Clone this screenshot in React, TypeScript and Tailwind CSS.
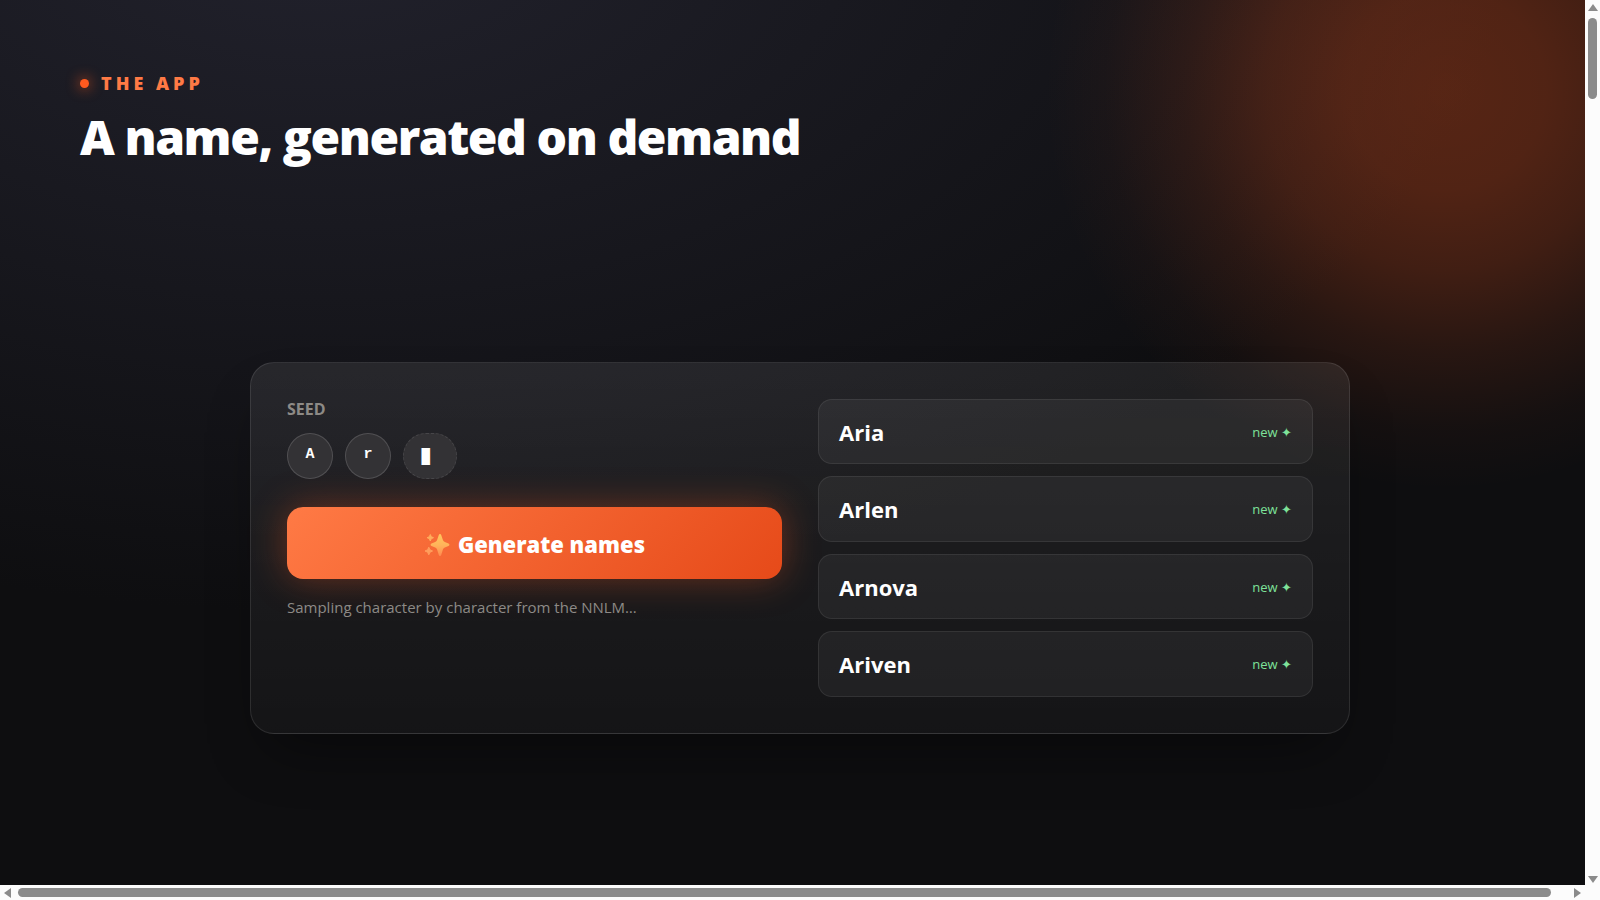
import React, { useState } from 'react';
import { clsx } from 'clsx';

interface GeneratedName {
  id: number;
  name: string;
}

const NAMES: GeneratedName[] = [
  { id: 1, name: 'Aria' },
  { id: 2, name: 'Arlen' },
  { id: 3, name: 'Arnova' },
  { id: 4, name: 'Ariven' },
];

const SEED = ['A', 'r'];

const Sparkles = () => (
  <svg width="26" height="26" viewBox="0 0 26 26" aria-hidden="true">
    <defs>
      <linearGradient id="spark" x1="0" y1="0" x2="0" y2="1">
        <stop offset="0" stopColor="#ffc65c" />
        <stop offset="0.5" stopColor="#ffb45a" />
        <stop offset="1" stopColor="#ff8a50" />
      </linearGradient>
    </defs>
    <path
      d="M16 2c.6 0 1 .4 1.200 1l1.800 5.200c.3.900.9 1.500 1.800 1.800l3.700 1.500c1.200.5 1.200 2.100 0 2.500l-3.700 1.500c-.9.300-1.500.9-1.800 1.800L17.200 23c-.4 1.200-2 1.200-2.400 0L13 17.300c-.3-.9-.9-1.500-1.800-1.800L7.500 14c-1.200-.5-1.200-2 0-2.500l3.700-1.500c.9-.3 1.500-.9 1.800-1.800L14.800 3c.2-.6.600-1 1.200-1z"
      fill="url(#spark)"
    />
    <path
      d="M6.300 2.500l1 2.200 2.200 1-2.200 1-1 2.300-1-2.300-2.200-1 2.200-1z"
      fill="#ffad5c"
      stroke="#ffad5c"
      strokeLinejoin="round"
    />
    <path
      d="M4.800 15.200l1.200 2.600 2.600 1.200L6 20.200l-1.200 2.600-1.200-2.600L1 19l2.600-1.200z"
      fill="#ff9d5c"
      stroke="#ff9d5c"
      strokeLinejoin="round"
    />
  </svg>
);

const Chip: React.FC<{ children: React.ReactNode; cursor?: boolean }> = ({ children, cursor }) => (
  <span
    className={clsx(
      'flex h-[46px] items-center justify-center rounded-full border bg-[#333235] text-white',
      cursor
        ? "w-[54px] border-dashed border-white/10 font-['Noto_Sans_CJK_JP',monospace] text-[17px]"
        : "w-[46px] border-white/15 font-['Liberation_Mono',monospace] text-[15px] font-bold"
    )}
  >
    {children}
  </span>
);

const Arrow: React.FC<{ d: string }> = ({ d }) => (
  <svg width="10" height="10" viewBox="0 0 10 10" fill="#8b8b8b" aria-hidden="true">
    <path d={d} />
  </svg>
);

const App: React.FC = () => {
  const [names] = useState<GeneratedName[]>(NAMES);

  return (
    <div className="grid h-screen grid-cols-[1fr_15px] grid-rows-[1fr_15px] bg-[#fcfcfc] font-['Open_Sans','Noto_Sans',sans-serif]">
      <main className="relative flex flex-col overflow-hidden bg-[#0e0e10] bg-[radial-gradient(1200px_700px_at_20%_-10%,#22222d_0%,#0e0e10_100%)] pt-[70px] pr-[65px] pl-20">
        {/* Warm glow in the corner */}
        <div className="pointer-events-none absolute -top-[310px] -right-[260px] size-[800px] bg-[radial-gradient(closest-side,rgba(255,90,31,0.3)_0%,rgba(255,90,31,0.28)_25%,rgba(255,90,31,0.21)_45%,rgba(255,90,31,0.11)_65%,rgba(255,90,31,0.03)_85%,rgba(255,90,31,0)_100%)]" />

        <header className="relative h-[140px] shrink-0">
          <p className="flex items-center gap-3 text-lg leading-[26px] font-extrabold tracking-[4px] text-[#ff7a45]">
            <span className="size-[9px] rounded-full bg-[#ff5a1f] shadow-[0_0_14px_#ff5a1f]" />
            THE APP
          </p>
          <h1 className="mt-3 text-5xl leading-[58px] font-extrabold tracking-[-0.03em] text-white">
            A name, generated on demand
          </h1>
        </header>

        <div className="relative flex flex-1 items-center justify-center">
          <section className="grid w-full max-w-[1100px] grid-cols-2 gap-9 rounded-3xl border border-white/10 bg-linear-to-b from-white/8 to-white/3 p-9 shadow-[0_30px_60px_-20px_rgba(0,0,0,0.45)]">
            <div>
              <h2 className="text-base leading-5 font-bold text-[#8d8a86]">SEED</h2>
              <div className="mt-[14px] flex gap-3">
                {SEED.map((char) => (
                  <Chip key={char}>{char}</Chip>
                ))}
                <Chip cursor>▌</Chip>
              </div>
              <button
                type="button"
                className="mt-7 flex h-[72px] w-full items-center justify-center gap-2 rounded-2xl bg-linear-[135deg,#ff7a45,#e64a19] pt-1 text-[22px] font-extrabold text-white shadow-[0_0_36px_rgba(255,90,31,0.35)]"
              >
                <Sparkles />
                Generate names
              </button>
              <p className="mt-4 text-[15px] leading-6 text-[#8d8a86]">
                Sampling character by character from the NNLM…
              </p>
            </div>

            <ul className="grid h-[298px] auto-rows-fr gap-3">
              {names.map((item) => (
                <li
                  key={item.id}
                  className="flex items-center justify-between rounded-[14px] border border-white/8 bg-white/5 px-5 pt-0.5"
                >
                  <span className="text-[22px] font-bold text-white">{item.name}</span>
                  <span className="text-[13px] text-[#7ee29a]">new ✦</span>
                </li>
              ))}
            </ul>
          </section>
        </div>
      </main>

      {/* Vertical scrollbar */}
      <div className="flex flex-col items-center justify-between pt-[3px]">
        <div className="flex flex-col items-center gap-[5px]">
          <Arrow d="M5 1 10 8H0z" />
          <div className="h-[81px] w-[9px] rounded-full bg-[#8b8b8b]" />
        </div>
        <Arrow d="M0 1h10L5 8z" />
      </div>

      {/* Horizontal scrollbar */}
      <div className="flex items-center gap-[5px] px-[3px]">
        <Arrow d="M1 5 8 0v10z" />
        <div className="flex-1 pr-4">
          <div className="h-[9px] rounded-full bg-[#8b8b8b]" />
        </div>
        <Arrow d="M2 0l7 5-7 5z" />
      </div>
    </div>
  );
};

export default App;
